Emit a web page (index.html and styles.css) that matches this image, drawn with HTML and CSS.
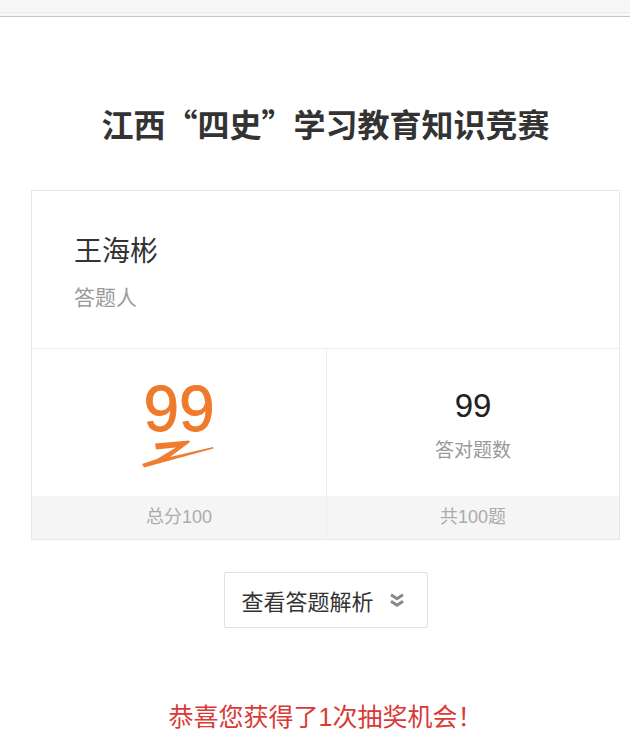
FILE: index.html
```html
<!DOCTYPE html>
<html lang="zh-CN">
<head>
<meta charset="utf-8">
<title>江西“四史”学习教育知识竞赛</title>
<link rel="stylesheet" href="styles.css">
</head>
<body>
<div class="topbar"></div>
<div class="topbar2"></div>
<main class="page">
  <h1 class="title">江西“四史”学习教育知识竞赛</h1>
  <section class="card">
    <div class="person">
      <div class="name">王海彬</div>
      <div class="label">答题人</div>
    </div>
    <div class="stats">
      <div class="stat">
        <div class="stat-main score-main">
          <div class="score">99</div>
          <svg class="swoosh" width="72" height="28" viewBox="0 0 72 28">
            <path d="M13 3.5 L47 0.5 L48 2 L28 17 L71 7 L71.5 8.5 L2 27.5 L0 24 L15 19 L34 7.5 L14 9.5 Z" fill="#f07c30"/>
          </svg>
        </div>
        <div class="stat-foot">总分100</div>
      </div>
      <div class="stat">
        <div class="stat-main count-main">
          <div class="count">99</div>
          <div class="count-label">答对题数</div>
        </div>
        <div class="stat-foot">共100题</div>
      </div>
    </div>
  </section>
  <div class="btn-row">
    <button class="btn" type="button">
      <span>查看答题解析</span>
      <svg class="chev" width="16" height="15" viewBox="0 0 16 15">
        <path d="M2 1.8 L8 5.8 L14 1.8 M2 8.3 L8 12.3 L14 8.3" fill="none" stroke="#888" stroke-width="3" stroke-linejoin="miter"/>
      </svg>
    </button>
  </div>
  <p class="prize">恭喜您获得了1次抽奖机会！</p>
</main>
</body>
</html>
```
FILE: styles.css
```css
html, body {
  margin: 0;
  padding: 0;
  background: #fff;
}
body {
  font-family: "Liberation Sans", "Noto Sans CJK SC", sans-serif;
  color: #333;
  overflow: hidden;
}
.topbar {
  height: 12px;
  background: #f6f6f6;
  border-bottom: 1px solid #ebebeb;
}
.topbar2 {
  height: 3px;
  background: #f7f7f7;
  border-bottom: 1px solid #c6c6c6;
}
.page {
  margin: 0 10px 0 31px;
}
.title {
  margin: 84px 0 0;
  font-family: "Noto Sans CJK SC", sans-serif;
  font-weight: 700;
  font-size: 32px;
  line-height: 44px;
  text-align: center;
  color: #333;
}
.card {
  margin-top: 45px;
  border: 1px solid #e8e8e8;
}
.person {
  padding: 38px 0 37px 42px;
  border-bottom: 1px solid #ececec;
  display: flex;
  flex-direction: column;
  gap: 12px;
}
.name {
  font-family: "Noto Sans CJK SC", sans-serif;
  font-size: 28px;
  line-height: 40px;
  color: #333;
}
.label {
  font-family: "Noto Sans CJK SC", sans-serif;
  font-size: 21px;
  line-height: 30px;
  color: #9a9a9a;
}
.stats {
  display: grid;
  grid-template-columns: 294px 1fr;
}
.stat + .stat {
  border-left: 1px solid #ececec;
}
.stat-main {
  height: 147px;
  box-sizing: border-box;
  display: flex;
  flex-direction: column;
  align-items: center;
}
.score-main {
  padding-top: 28px;
}
.score {
  font-size: 64px;
  line-height: 64px;
  color: #f07a2c;
  -webkit-text-stroke: 0.8px #f07a2c;
}
.swoosh {
  display: block;
  margin-top: -1px;
  margin-left: -2px;
}
.count-main {
  padding-top: 37px;
  gap: 11px;
}
.count {
  font-size: 33px;
  line-height: 40px;
  color: #222;
}
.count-label {
  font-size: 19px;
  line-height: 28px;
  color: #999;
}
.stat-foot {
  height: 43px;
  line-height: 43px;
  background: #f5f5f5;
  text-align: center;
  font-size: 18px;
  color: #ababab;
}
.btn-row {
  display: flex;
  justify-content: center;
  margin-top: 32px;
}
.btn {
  width: 204px;
  height: 56px;
  box-sizing: border-box;
  border: 1px solid #e2e2e2;
  border-radius: 2px;
  background: #fff;
  padding: 0 0 0 17px;
  display: flex;
  align-items: center;
  gap: 15px;
  font-family: "Noto Sans CJK SC", sans-serif;
  font-size: 22px;
  color: #333;
  cursor: pointer;
}
.chev {
  display: block;
}
.prize {
  margin: 72px 0 0;
  font-family: "Liberation Sans", "Noto Sans CJK SC", sans-serif;
  font-size: 25px;
  line-height: 34px;
  text-align: center;
  color: #d93a36;
}
```
